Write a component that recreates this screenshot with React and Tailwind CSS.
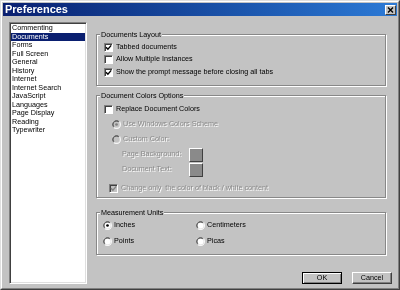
import React from "react";

function Check({ checked, disabled }) {
  return (
    <span
      className={`relative inline-block w-[9px] h-[9px] shrink-0 border border-t-[#808080] border-l-[#808080] border-b-white border-r-white shadow-[inset_1px_1px_0_#404040] ${disabled ? "bg-[#c3c3c3]" : "bg-white"}`}
    >
      {checked && (
        <svg viewBox="0 0 7 7" className="absolute left-0 top-0 w-[7px] h-[7px]">
          <path d="M1 3.2 L2.9 5.2 L6.2 1.4" stroke={disabled ? "#808080" : "#000"} strokeWidth="1.4" fill="none" />
        </svg>
      )}
    </span>
  );
}

function Radio({ checked, disabled }) {
  return (
    <svg viewBox="0 0 12 12" className="w-[9px] h-[9px] shrink-0">
      <circle cx="6" cy="6" r="6" fill="#ffffff" />
      <path d="M1.76 10.24 A6 6 0 0 1 10.24 1.76 Z" fill="#808080" />
      <circle cx="6" cy="6" r="5" fill="#dfdfdf" />
      <path d="M2.46 9.54 A5 5 0 0 1 9.54 2.46 Z" fill="#404040" />
      <circle cx="6" cy="6" r="4" fill={disabled ? "#c3c3c3" : "#ffffff"} />
      {checked && <circle cx="6" cy="6" r="1.8" fill={disabled ? "#808080" : "#000"} />}
    </svg>
  );
}

function Group({ title, className, children }) {
  return (
    <div className={`relative border border-[#888888] shadow-[inset_1px_1px_0_#ffffff,1px_1px_0_#ffffff] ${className}`}>
      <span className="absolute -top-[5px] left-[3px] bg-[#c3c3c3] px-[1px] leading-[9px]">{title}</span>
      {children}
    </div>
  );
}

const dis = "text-[#8a8a8a] [text-shadow:1px_1px_0_#ffffff]";

export default function App() {
  const items = [
    "Commenting",
    "Documents",
    "Forms",
    "Full Screen",
    "General",
    "History",
    "Internet",
    "Internet Search",
    "JavaScript",
    "Languages",
    "Page Display",
    "Reading",
    "Typewriter",
  ];
  return (
    <div className="w-[400px] h-[290px] bg-[#c3c3c3] border border-t-[#dfdfdf] border-l-[#dfdfdf] border-r-[#404040] border-b-[#404040] font-['Liberation_Sans',Arial,sans-serif] text-[7.2px] text-black overflow-hidden antialiased [will-change:transform]">
      <div className="w-full h-full border border-t-white border-l-white border-r-[#808080] border-b-[#808080] p-[1px] flex flex-col">
        {/* Title bar */}
        <div className="h-[13px] shrink-0 flex items-center justify-between bg-gradient-to-r from-[#0a1f70] to-[#2c7ad6]">
          <span className="pl-[2px] text-white font-bold text-[11px] leading-[13px]">Preferences</span>
          <span className="mr-[1px] w-[11px] h-[10px] bg-[#c3c3c3] border border-t-white border-l-white border-r-[#404040] border-b-[#404040] flex items-center justify-center">
            <svg viewBox="0 0 7 6" className="w-[7px] h-[6px]">
              <path d="M1 0.5 L6 5.5 M6 0.5 L1 5.5" stroke="#000" strokeWidth="1.4" />
            </svg>
          </span>
        </div>
        {/* Body */}
        <div className="flex-1 flex pl-[6px] pt-[6px] pb-[2px]">
          <div className="w-[78px] h-[262px] bg-white border border-t-[#808080] border-l-[#808080] border-r-white border-b-white shadow-[inset_1px_1px_0_#404040,inset_-1px_-1px_0_#dfdfdf] pt-[1px] px-[1px]">
            {items.map((t) => (
              <div
                key={t}
                className={`h-[8.5px] leading-[8.5px] pl-[1px] ${t === "Documents" ? "bg-[#0a1f70] text-white" : "text-black"}`}
              >
                {t}
              </div>
            ))}
          </div>
          <div className="ml-[9px] w-[296px] pt-[12px] flex flex-col">
            <Group title="Documents Layout" className="w-[290px] h-[52px] pt-[6px] pl-[7px]">
              <div className="h-[12.5px] flex items-center gap-[3px]">
                <Check checked />
                <span>Tabbed documents</span>
              </div>
              <div className="h-[12.5px] flex items-center gap-[3px]">
                <Check />
                <span>Allow Multiple Instances</span>
              </div>
              <div className="h-[12.5px] flex items-center gap-[3px]">
                <Check checked />
                <span>Show the prompt message before closing all tabs</span>
              </div>
            </Group>
            <Group title="Document Colors Options" className="mt-[9px] w-[290px] h-[103px] pt-[6px]">
              <div className="h-[15px] flex items-center gap-[3px] pl-[7px]">
                <Check />
                <span>Replace Document Colors</span>
              </div>
              <div className={`h-[15px] flex items-center gap-[2px] pl-[15px] ${dis}`}>
                <Radio checked disabled />
                <span>Use Windows Colors Scheme</span>
              </div>
              <div className={`h-[15px] flex items-center gap-[2px] pl-[15px] ${dis}`}>
                <Radio disabled />
                <span>Custom Color:</span>
              </div>
              <div className={`h-[15px] flex items-center pl-[25px] ${dis}`}>
                <span className="w-[67px]">Page Background:</span>
                <span className="w-[14px] h-[14px] bg-[#8a8a8a] border border-t-white border-l-white border-r-[#404040] border-b-[#404040]" />
              </div>
              <div className={`h-[15px] flex items-center pl-[25px] ${dis}`}>
                <span className="w-[67px]">Document Text:</span>
                <span className="w-[14px] h-[14px] bg-[#8a8a8a] border border-t-white border-l-white border-r-[#404040] border-b-[#404040]" />
              </div>
              <div className={`mt-[4px] h-[15px] flex items-center gap-[3px] pl-[12px] ${dis}`}>
                <Check checked disabled />
                <span>Change only&nbsp; the color of black / white content</span>
              </div>
            </Group>
            <Group title="Measurement Units" className="mt-[14px] w-[290px] h-[43px] pt-[4px] pl-[6px] grid grid-cols-[93px_1fr] content-start">
              <div className="h-[16px] flex items-center gap-[2px]">
                <Radio checked />
                <span>Inches</span>
              </div>
              <div className="h-[16px] flex items-center gap-[2px]">
                <Radio />
                <span>Centimeters</span>
              </div>
              <div className="h-[16px] flex items-center gap-[2px]">
                <Radio />
                <span>Points</span>
              </div>
              <div className="h-[16px] flex items-center gap-[2px]">
                <Radio />
                <span>Picas</span>
              </div>
            </Group>
            <div className="mt-[17px] flex justify-end gap-[10px]">
              <button className="w-[40px] h-[12px] border border-black bg-[#c3c3c3] shadow-[inset_1px_1px_0_#ffffff,inset_-1px_-1px_0_#808080] flex items-center justify-center leading-none">
                OK
              </button>
              <button className="w-[40px] h-[12px] border border-t-white border-l-white border-r-[#404040] border-b-[#404040] bg-[#c3c3c3] shadow-[inset_-1px_-1px_0_#808080] flex items-center justify-center leading-none">
                Cancel
              </button>
            </div>
          </div>
        </div>
      </div>
    </div>
  );
}
